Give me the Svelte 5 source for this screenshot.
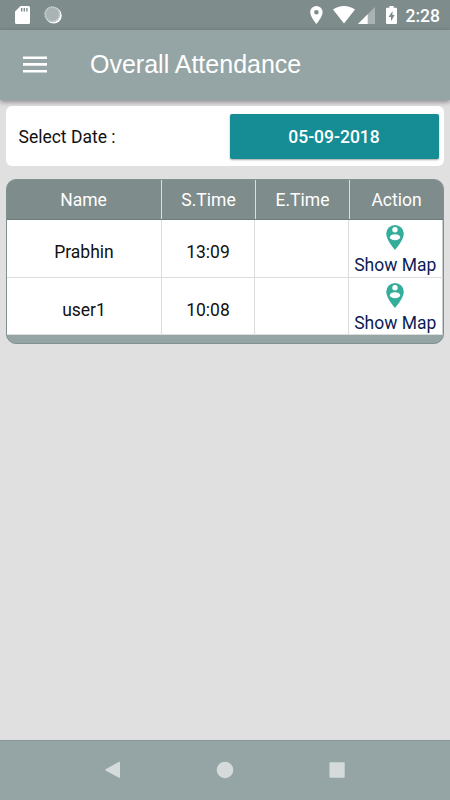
<script>
	const date = '05-09-2018';

	const columns = ['Name', 'S.Time', 'E.Time', 'Action'];

	const rows = [
		{ name: 'Prabhin', start: '13:09', end: '' },
		{ name: 'user1', start: '10:08', end: '' }
	];
</script>

<div class="screen">
	<!-- Status bar -->
	<div class="status-bar">
		<svg class="sd" width="15" height="18" viewBox="0 0 15 18">
			<path
				fill="#fff"
				fill-rule="evenodd"
				d="M5.5 0H13.5Q15 0 15 1.5V16.5Q15 18 13.5 18H1.5Q0 18 0 16.5V5.5ZM6 2V5.4H7.4V2ZM8.6 2V5.4H10V2ZM11.2 2V5.4H12.6V2Z"
			/>
		</svg>
		<svg width="18" height="18" viewBox="0 0 18 18">
			<circle cx="9.6" cy="9.4" r="8.1" fill="#fff" />
			<circle cx="8.4" cy="8.3" r="7.9" fill="#a9b3b3" />
			<circle
				cx="8.4"
				cy="8.3"
				r="7.2"
				fill="none"
				stroke="#d3d9d9"
				stroke-width="1.6"
				stroke-dasharray="1 1"
			/>
		</svg>
		<div class="status-right">
			<svg class="pin" width="13" height="18" viewBox="0 0 13 18">
				<path
					fill="#fff"
					fill-rule="evenodd"
					d="M6.4 0A6.2 6.2 0 0 0 .2 6.2C.2 10.8 6.4 18 6.4 18S12.6 10.8 12.6 6.2A6.2 6.2 0 0 0 6.4 0ZM6.4 8.5A2.3 2.3 0 1 1 6.4 3.9A2.3 2.3 0 0 1 6.4 8.5Z"
				/>
			</svg>
			<svg class="wifi" width="22" height="18" viewBox="0 0 22 18">
				<path fill="#fff" d="M0 3.5Q4.8 0 11 0T22 3.5L11 17.5Z" />
			</svg>
			<svg class="signal" width="17" height="17" viewBox="0 0 17 17">
				<path fill="#a9b3b3" d="M0 17L17 0V17Z" />
				<path fill="#fff" d="M0 17L9.7 7.3V17Z" />
			</svg>
			<svg class="battery" width="11" height="18" viewBox="0 0 11 18">
				<path
					fill="#fff"
					fill-rule="evenodd"
					d="M3.4 0H7.6V1.8H10Q11 1.8 11 2.8V17Q11 18 10 18H1Q0 18 0 17V2.8Q0 1.8 1 1.8H3.4ZM6.5 5L2.5 11H5V15.2L8.7 9H6.5Z"
				/>
			</svg>
			<span class="clock">2:28</span>
		</div>
	</div>

	<!-- Toolbar -->
	<header class="toolbar">
		<button class="menu-button" aria-label="Open menu">
			<svg width="24" height="17" viewBox="0 0 24 17">
				<path fill="#fff" d="M0 .4H24V3H0ZM0 7.1H24V9.7H0ZM0 13.9H24V16.5H0Z" />
			</svg>
		</button>
		<h1>Overall Attendance</h1>
	</header>

	<main>
		<div class="date-card">
			<span>Select Date :</span>
			<button class="date-button">{date}</button>
		</div>

		<div class="table">
			<div class="row head">
				{#each columns as column}
					<div class="cell">{column}</div>
				{/each}
			</div>
			{#each rows as row}
				<div class="row">
					<div class="cell">{row.name}</div>
					<div class="cell">{row.start}</div>
					<div class="cell">{row.end}</div>
					<div class="cell action">
						<svg width="18" height="25" viewBox="0 0 18 25">
							<path
								fill="#35ad9b"
								d="M9 0A8.8 8.8 0 0 0 .2 8.8C.2 15.3 9 25 9 25S17.8 15.3 17.8 8.8A8.8 8.8 0 0 0 9 0Z"
							/>
							<circle cx="9" cy="4.8" r="2.7" fill="#fff" />
							<ellipse cx="9" cy="12.2" rx="5.1" ry="3" fill="#fff" />
						</svg>
						<span>Show Map</span>
					</div>
				</div>
			{/each}
		</div>
	</main>

	<!-- Navigation bar -->
	<nav class="nav-bar">
		<svg width="16" height="18" viewBox="0 0 16 18">
			<path fill="#d5dbdb" d="M.6 8.2L14 .8Q15 .4 15 1.4V16.2Q15 17.2 14 16.7L.6 9.4Q0 8.8 .6 8.2Z" />
		</svg>
		<svg width="18" height="18" viewBox="0 0 18 18">
			<circle cx="9" cy="9" r="8.3" fill="#d5dbdb" />
		</svg>
		<svg width="16" height="18" viewBox="0 0 16 18">
			<rect x=".5" y="1.2" width="15.2" height="15.6" rx="1" fill="#d5dbdb" />
		</svg>
	</nav>
</div>

<style>
	:global(body) {
		margin: 0;
	}

	.screen {
		display: flex;
		flex-direction: column;
		width: 450px;
		height: 800px;
		overflow: hidden;
		background: #e0e0e0;
		font-family: Roboto, sans-serif;
		font-size: 17.5px;
		color: #111;
	}

	svg {
		display: block;
		flex: none;
	}

	button {
		border: none;
		padding: 0;
		font: inherit;
	}

	/* Status bar */
	.status-bar {
		display: flex;
		align-items: flex-start;
		gap: 13.5px;
		box-sizing: border-box;
		height: 30px;
		padding: 6px 10px 0 15px;
		background: #7f8c8c;
	}

	.status-right {
		display: flex;
		margin-left: auto;
	}

	.wifi {
		margin-left: 10px;
	}

	.signal {
		margin: 1px 0 0 3px;
	}

	.battery {
		margin-left: 10.5px;
	}

	.clock {
		margin-left: 9px;
		font-size: 17.5px;
		font-weight: 500;
		line-height: 20px;
		color: #fff;
	}

	/* Toolbar */
	.toolbar {
		display: flex;
		align-items: center;
		box-sizing: border-box;
		flex: none;
		height: 70px;
		padding: 0 0 1px 23px;
		background: #95a5a5;
		box-shadow: 0 2px 5px rgba(0, 0, 0, 0.4);
	}

	.menu-button {
		background: none;
	}

	h1 {
		margin: 0 0 1px 43px;
		font-family: 'Liberation Sans', sans-serif;
		font-size: 25px;
		font-weight: 400;
		color: #fff;
	}

	main {
		flex: 1;
		padding: 6px;
	}

	.date-card {
		display: flex;
		align-items: center;
		justify-content: space-between;
		box-sizing: border-box;
		height: 60px;
		padding: 0 5px 0 12.5px;
		border-radius: 6px;
		background: #fff;
	}

	.date-card span {
		padding-top: 2px;
	}

	.date-button {
		width: 209px;
		height: 45px;
		padding: 2px 1px 0 0;
		border-radius: 2px;
		background: #168c94;
		color: #fff;
		font-weight: 500;
		box-shadow: 0 1px 2px rgba(0, 0, 0, 0.35);
	}

	/* Attendance table */
	.table {
		box-sizing: border-box;
		height: 165px;
		margin-top: 13px;
		border: 1px solid #819090;
		border-radius: 10px;
		background: #95a5a5;
		overflow: hidden;
	}

	.row {
		display: grid;
		grid-template-columns: 155px 93px 93.5px 94.5px;
		box-sizing: border-box;
		height: 57.5px;
		border-bottom: 1px solid #ddd;
		background: #fff;
	}

	.cell {
		display: flex;
		align-items: center;
		justify-content: center;
		padding-top: 8px;
		border-right: 1px solid #ddd;
	}

	.cell:last-child {
		border-right-color: #c4cccc;
	}

	.head {
		grid-template-columns: 155px 94px 94px 93px;
		height: 40px;
		border-bottom: 1px solid #6e7b7b;
		background: #7f8c8c;
		color: #fff;
	}

	.head .cell {
		padding-top: 1px;
	}

	.head .cell:last-child {
		border-right: none;
	}

	.head .cell:first-child {
		padding-right: 1px;
	}

	.action {
		flex-direction: column;
		justify-content: flex-start;
		padding-top: 5px;
		color: #0b1c58;
	}

	.action span {
		margin-top: 5px;
		line-height: 21px;
	}

	/* Navigation bar */
	.nav-bar {
		display: flex;
		align-items: center;
		justify-content: space-between;
		box-sizing: border-box;
		height: 60px;
		padding: 0 105px 1px;
		border-top: 1px solid #889898;
		background: #95a5a5;
	}
</style>
